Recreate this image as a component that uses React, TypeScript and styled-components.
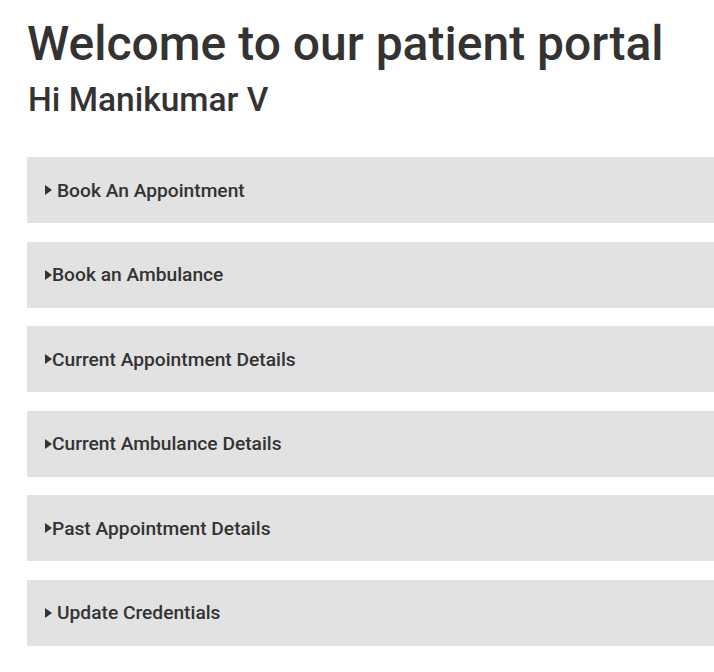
import React from "react";
import styled, { createGlobalStyle } from "styled-components";

const GlobalStyle = createGlobalStyle`
  html, body { margin: 0; padding: 0; background: #ffffff; overflow: hidden; }
  body { font-family: Roboto, "Liberation Sans", sans-serif; color: #333333; }
`;

const Page = styled.main`
  display: flex;
  flex-direction: column;
  padding: 16px 0 0 27px;
`;

const Title = styled.h1`
  margin: 0;
  font-size: 48px;
  font-weight: 500;
  line-height: 56px;
`;

const Greeting = styled.h2`
  margin: 8px 0 37px 1px;
  font-size: 33.5px;
  font-weight: 500;
  line-height: 40px;
`;

const List = styled.div`
  display: flex;
  flex-direction: column;
  gap: 18.6px;
`;

const Item = styled.div`
  height: 66px;
  background: #e2e2e2;
  display: flex;
  align-items: center;
  padding-left: 18px;
`;

const Caret = styled.span<{ $spaced?: boolean }>`
  width: 0;
  height: 0;
  border-top: 5.5px solid transparent;
  border-bottom: 5.5px solid transparent;
  border-left: 7px solid #333333;
  margin-right: ${(p) => (p.$spaced ? "5px" : "0px")};
`;

const Label = styled.span`
  font-size: 19.2px;
  font-weight: 500;
  color: #333333;
`;

const items = [
  { label: "Book An Appointment", spaced: true },
  { label: "Book an Ambulance", spaced: false },
  { label: "Current Appointment Details", spaced: false },
  { label: "Current Ambulance Details", spaced: false },
  { label: "Past Appointment Details", spaced: false },
  { label: "Update Credentials", spaced: true },
];

export default function App() {
  return (
    <>
      <GlobalStyle />
      <Page>
        <Title>Welcome to our patient portal</Title>
        <Greeting>Hi Manikumar V</Greeting>
        <List>
          {items.map((it) => (
            <Item key={it.label}>
              <Caret $spaced={it.spaced} />
              <Label>{it.label}</Label>
            </Item>
          ))}
        </List>
      </Page>
    </>
  );
}
